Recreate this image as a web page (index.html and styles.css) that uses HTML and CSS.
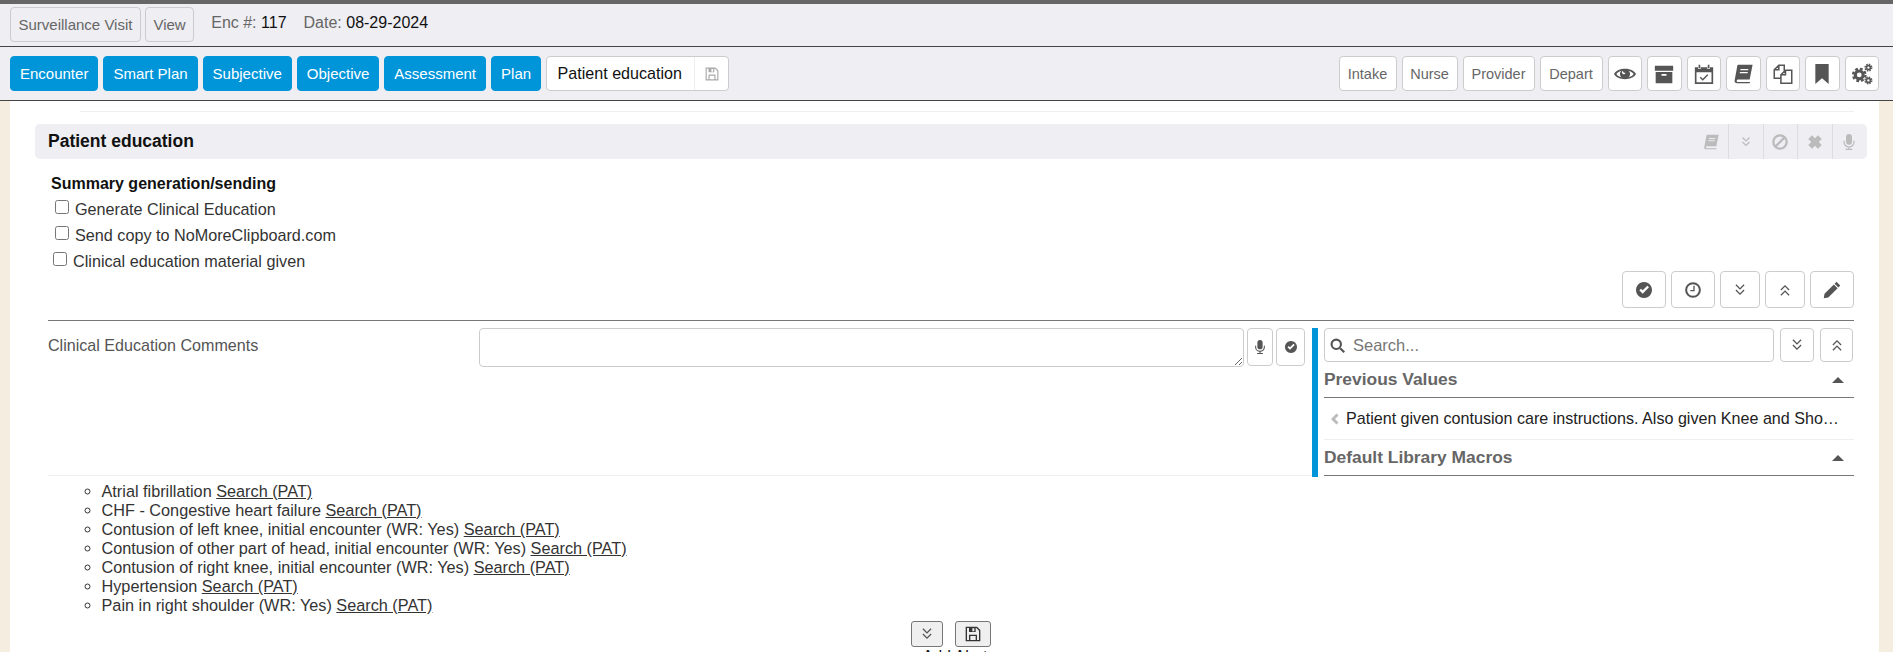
FILE: index.html
```html
<!DOCTYPE html>
<html lang="en">
<head>
<meta charset="utf-8">
<title>Patient education</title>
<link rel="stylesheet" href="styles.css">
</head>
<body>
<svg class="sprite" aria-hidden="true">
  <symbol id="i-eye" viewBox="0 0 24 24"><path fill-rule="evenodd" d="M0 12C4 4.500 20 4.500 24 12 20 19.500 4 19.500 0 12ZM2.500 12C6 17.500 18 17.500 21.500 12 18 6.500 6 6.500 2.500 12Z"/><path fill-rule="evenodd" d="M12 6.500a5.500 5.500 0 1 1-.01 0ZM9.500 8.500a2 2 0 1 0 3 2.500 3 3 0 0 1-3-2.500Z"/></symbol>
  <symbol id="i-archive" viewBox="0 0 24 24"><path fill-rule="evenodd" d="M1 2h22v6H1ZM2 9.500h20V23H2ZM9 12v2h6v-2Z"/></symbol>
  <symbol id="i-cal" viewBox="0 0 24 24"><path fill-rule="evenodd" d="M1 4h4v2h3V4h8v2h3V4h4v20H1ZM3 10v12h18V10Z"/><path d="M5.500 1h2v4h-2ZM16.500 1h2v4h-2Z"/><path d="M7.500 16l3 3 6-6" fill="none" stroke="currentColor" stroke-width="1.700"/></symbol>
  <symbol id="i-book" viewBox="0 0 24 24"><path fill-rule="evenodd" d="M6 1H23.500L20 18.500H6.500C5 18.500 4.500 19.200 4.400 20S5 21.500 6 21.500H20.500L20 23H5C2.500 23 1.500 21.500 2 19.500L5 3C5.200 2 5.500 1 6 1ZM9 6l-.3 1.500h9.500L18.500 6ZM8.300 9.500 8 11h9.500l.3-1.500Z"/></symbol>
  <symbol id="i-copy" viewBox="0 0 24 24"><path fill="none" stroke="currentColor" stroke-width="1.800" d="M9.500 17H1.500V7L7 1.500h6.500V8M7 1.500V7H1.500M9.500 23V13L15 7.500H22.500V23ZM15 7.500V13H9.500"/></symbol>
  <symbol id="i-mark" viewBox="0 0 24 24"><path d="M4 0H20V24L12 17 4 24Z"/></symbol>
  <symbol id="i-gears" viewBox="0 0 24 24"><g fill="none" stroke="currentColor"><circle cx="9" cy="13" r="4.300" stroke-width="3.400"/><circle cx="9" cy="13" r="6.800" stroke-width="2.400" stroke-dasharray="3 2.340"/><circle cx="19" cy="5" r="2.200" stroke-width="1.800"/><circle cx="19" cy="5" r="3.700" stroke-width="1.400" stroke-dasharray="1.700 1.200"/><circle cx="19" cy="19" r="2.200" stroke-width="1.800"/><circle cx="19" cy="19" r="3.700" stroke-width="1.400" stroke-dasharray="1.700 1.200"/></g></symbol>
  <symbol id="i-ban" viewBox="0 0 24 24"><g fill="none" stroke="currentColor" stroke-width="3.400"><circle cx="12" cy="12" r="10"/><path d="M5 19 19 5"/></g></symbol>
  <symbol id="i-x" viewBox="0 0 24 24"><path d="M3 8 8 3l4 4 4-4 5 5-4 4 4 4-5 5-4-4-4 4-5-5 4-4Z"/></symbol>
  <symbol id="i-mic" viewBox="0 0 24 24"><rect x="7.500" y="0" width="9" height="16" rx="4.500"/><path d="M4.500 10v2a7.500 7.500 0 0 0 15 0v-2M12 19.500V23M7 23h10" fill="none" stroke="currentColor" stroke-width="1.800"/></symbol>
  <symbol id="i-check" viewBox="0 0 24 24"><path fill-rule="evenodd" d="M12 0a12 12 0 1 1-.01 0ZM5 12.500 10 17.500 19.500 8 17 5.500 10 12.500 7.500 10Z"/></symbol>
  <symbol id="i-clock" viewBox="0 0 24 24"><circle cx="12" cy="12" r="10.300" fill="none" stroke="currentColor" stroke-width="3"/><path d="M12.500 5.500h2V14H8v-2h4.500Z"/></symbol>
  <symbol id="i-down" viewBox="0 0 24 24"><path fill="none" stroke="currentColor" stroke-width="2.200" d="M5 3l7 7 7-7M5 12l7 7 7-7"/></symbol>
  <symbol id="i-up" viewBox="0 0 24 24"><path fill="none" stroke="currentColor" stroke-width="2.200" d="M5 12l7-7 7 7M5 21l7-7 7 7"/></symbol>
  <symbol id="i-pencil" viewBox="0 0 24 24"><path d="M18 1 23 6 20.500 8.500 15.500 3.500ZM14.500 4.500 19.500 9.500 7 22 1 23 2 17Z"/></symbol>
  <symbol id="i-search" viewBox="0 0 24 24"><circle cx="10" cy="10" r="7.500" fill="none" stroke="currentColor" stroke-width="3.400"/><path d="M15 17.500 17.500 15 24 21.500 21.500 24Z"/></symbol>
  <symbol id="i-save" viewBox="0 0 24 24"><path fill-rule="evenodd" d="M1 1H18L23 6V23H1ZM3 3V21H21V7L17 3H16V9H6V3ZM11 3.500V8H14V3.500ZM6 13H18V21H16V15H8V21H6Z"/></symbol>
  <symbol id="i-left" viewBox="0 0 24 24"><path d="M15 1 19 5 12 12 19 19 15 23 4 12Z"/></symbol>
</svg>

<header class="topbar">
  <button class="btn btn-plain">Surveillance Visit</button>
  <button class="btn btn-plain">View</button>
  <div class="enc"><span class="enc-label">Enc #:</span> <b>117</b></div>
  <div class="enc"><span class="enc-label">Date:</span> <b>08-29-2024</b></div>
</header>

<nav class="navbar">
  <div class="nav-group">
    <button class="btn btn-blue">Encounter</button>
    <button class="btn btn-blue">Smart Plan</button>
    <button class="btn btn-blue">Subjective</button>
    <button class="btn btn-blue">Objective</button>
    <button class="btn btn-blue">Assessment</button>
    <button class="btn btn-blue">Plan</button>
    <div class="current">
      <span class="current-text">Patient education</span>
      <span class="current-save"><svg class="ico ico-14"><use href="#i-save"/></svg></span>
    </div>
  </div>
  <div class="nav-group">
    <button class="btn btn-white w58">Intake</button>
    <button class="btn btn-white w56">Nurse</button>
    <button class="btn btn-white w72">Provider</button>
    <button class="btn btn-white w63">Depart</button>
    <button class="btn btn-icon"><svg class="ico ico-22"><use href="#i-eye"/></svg></button>
    <button class="btn btn-icon"><svg class="ico ico-20"><use href="#i-archive"/></svg></button>
    <button class="btn btn-icon"><svg class="ico ico-20"><use href="#i-cal"/></svg></button>
    <button class="btn btn-icon"><svg class="ico ico-20"><use href="#i-book"/></svg></button>
    <button class="btn btn-icon"><svg class="ico ico-20"><use href="#i-copy"/></svg></button>
    <button class="btn btn-icon"><svg class="ico ico-20"><use href="#i-mark"/></svg></button>
    <button class="btn btn-icon"><svg class="ico ico-22"><use href="#i-gears"/></svg></button>
  </div>
</nav>

<main class="page">
  <div class="top-rule"></div>
  <section class="section-bar">
    <h2>Patient education</h2>
    <div class="section-tools">
      <span class="tool"><svg class="ico ico-16"><use href="#i-book"/></svg></span>
      <span class="tool"><svg class="ico ico-12"><use href="#i-down"/></svg></span>
      <span class="tool"><svg class="ico ico-16"><use href="#i-ban"/></svg></span>
      <span class="tool"><svg class="ico ico-18"><use href="#i-x"/></svg></span>
      <span class="tool"><svg class="ico ico-16"><use href="#i-mic"/></svg></span>
    </div>
  </section>

  <div class="content">
    <div class="summary">
      <h3>Summary generation/sending</h3>
      <label class="check c1"><input type="checkbox"> Generate Clinical Education</label>
      <label class="check c1"><input type="checkbox"> Send copy to NoMoreClipboard.com</label>
      <label class="check c2"><input type="checkbox"> Clinical education material given</label>
    </div>

    <div class="actions">
      <button class="btn btn-act w44"><svg class="ico ico-16"><use href="#i-check"/></svg></button>
      <button class="btn btn-act w44"><svg class="ico ico-16"><use href="#i-clock"/></svg></button>
      <button class="btn btn-act"><svg class="ico ico-14"><use href="#i-down"/></svg></button>
      <button class="btn btn-act"><svg class="ico ico-14"><use href="#i-up"/></svg></button>
      <button class="btn btn-act w44"><svg class="ico ico-18"><use href="#i-pencil"/></svg></button>
    </div>

    <div class="comments">
      <div class="comments-label">Clinical Education Comments</div>
      <div class="comments-input">
        <textarea class="textarea"></textarea>
        <button class="btn btn-mini w26"><svg class="ico ico-14"><use href="#i-mic"/></svg></button>
        <button class="btn btn-mini w29"><svg class="ico ico-12"><use href="#i-check"/></svg></button>
      </div>
      <aside class="side">
        <div class="side-search">
          <div class="search-box"><svg class="ico ico-15"><use href="#i-search"/></svg><span>Search...</span></div>
          <button class="btn btn-mini w34"><svg class="ico ico-14"><use href="#i-down"/></svg></button>
          <button class="btn btn-mini w33"><svg class="ico ico-14"><use href="#i-up"/></svg></button>
        </div>
        <div class="side-head"><span>Previous Values</span><i class="caret"></i></div>
        <div class="side-row"><svg class="ico ico-12 faint"><use href="#i-left"/></svg><span class="side-text">Patient given contusion care instructions. Also given Knee and Shoulder exercises.</span></div>
        <div class="side-head"><span>Default Library Macros</span><i class="caret"></i></div>
      </aside>
    </div>

    <ul class="problems">
      <li>Atrial fibrillation <a href="#">Search (PAT)</a></li>
      <li>CHF - Congestive heart failure <a href="#">Search (PAT)</a></li>
      <li>Contusion of left knee, initial encounter (WR: Yes) <a href="#">Search (PAT)</a></li>
      <li>Contusion of other part of head, initial encounter (WR: Yes) <a href="#">Search (PAT)</a></li>
      <li>Contusion of right knee, initial encounter (WR: Yes) <a href="#">Search (PAT)</a></li>
      <li>Hypertension <a href="#">Search (PAT)</a></li>
      <li>Pain in right shoulder (WR: Yes) <a href="#">Search (PAT)</a></li>
    </ul>

    <div class="foot">
      <button class="foot-btn w32"><svg class="ico ico-14"><use href="#i-down"/></svg></button>
      <button class="foot-btn w36"><svg class="ico ico-16 dark"><use href="#i-save"/></svg></button>
    </div>
    <div class="foot-text">Add Alert</div>
  </div>
</main>
</body>
</html>
```

FILE: styles.css
```css
* { box-sizing: border-box; }
html, body { margin: 0; height: 652px; overflow: hidden; }
body {
  background: #f5eee0;
  font-family: "Liberation Sans", Arial, sans-serif;
  font-size: 16px;
  color: #222;
}
.sprite { position: absolute; width: 0; height: 0; }
.ico { display: block; fill: currentColor; color: #555; flex: none; }
.ico-12 { width: 12px; height: 12px; }
.ico-14 { width: 14px; height: 14px; }
.ico-15 { width: 15px; height: 15px; }
.ico-16 { width: 16px; height: 16px; }
.ico-18 { width: 18px; height: 18px; }
.ico-20 { width: 20px; height: 20px; }
.ico-22 { width: 22px; height: 22px; }
.faint { color: #bbb; }
.dark { color: #333; }

.btn {
  display: flex;
  align-items: center;
  justify-content: center;
  height: 35px;
  padding: 0 7.500px;
  border-radius: 4px;
  border: 1px solid #ccc;
  font: 15px "Liberation Sans", Arial, sans-serif;
  background: #fff;
  color: #666;
  white-space: nowrap;
}
.btn-plain { background: #eeeef3; }
.btn-blue { background: #0095d9; border-color: #0095d9; color: #fff; padding: 0 9px; }
.btn-white { color: #666; padding: 0; font-size: 14.500px; }
.btn-icon { width: 34.500px; padding: 0; }
.w58 { width: 58px; }
.w56 { width: 56px; }
.w72 { width: 72px; }
.w63 { width: 63px; }

.topbar {
  height: 47px;
  border-top: 4px solid #666;
  border-bottom: 1px solid #444;
  background: #eeeef3;
  display: flex;
  align-items: center;
  gap: 4px;
  padding: 0 10px 2px;
}
.enc { margin-left: 13px; color: #666; margin-top: -3px; }
.enc + .enc { margin-left: 13px; }
.enc b { font-weight: 400; color: #111; }

.navbar {
  height: 54px;
  border-bottom: 1px solid #444;
  background: #eeeef3;
  display: flex;
  align-items: center;
  justify-content: space-between;
  padding: 0 14px 0 10px;
}
.nav-group { display: flex; gap: 5px; }
.current {
  display: flex;
  height: 35px;
  width: 183px;
  background: #fff;
  border: 1px solid #ccc;
  border-radius: 4px;
  align-items: center;
}
.current-text { width: 147px; padding-left: 10.500px; color: #111; font-size: 16.100px; white-space: nowrap; }
.current-save { flex: 1; height: 100%; border-left: 1px solid #eee; display: flex; align-items: center; justify-content: center; }
.current-save .ico { color: #aaa; }

.page { margin: 0 14px 0 10px; background: #fff; height: 552px; overflow: hidden; padding-top: 10px; }
.top-rule { margin: 0 25px 0 70px; height: 1px; background: #eee; }
.section-bar {
  margin: 12px 12px 0 25px;
  height: 35px;
  background: #eeeef3;
  border-radius: 5px;
  display: flex;
  align-items: center;
  justify-content: space-between;
  padding: 0 1px 0 13px;
}
.section-bar h2 { margin: 0; font-size: 17.500px; font-weight: 700; color: #111; }
.section-tools { display: flex; height: 100%; }
.tool { width: 34.500px; display: flex; align-items: center; justify-content: center; border-left: 1px solid #ddd; }
.tool:first-child { border-left: 0; }
.tool .ico { color: #bbb; }

.content { margin: 0 25px 0 38px; }
.summary { padding: 16px 0 0 3px; height: 112px; }
.summary h3 { margin: 0 0 3px; font-size: 16px; line-height: 18px; color: #111; }
.check { display: flex; align-items: center; height: 26px; color: #333; font-size: 16.200px; margin-left: 4px; gap: 4px; }
.check input { margin: 0 2px 0 0; width: 14px; height: 14px; position: relative; top: -2px; }
.c2 { margin-left: 2px; }

.actions { display: flex; justify-content: flex-end; gap: 5px; height: 37px; }
.btn-act { height: 37px; width: 40px; padding: 0; }
.w44 { width: 44px; }

.comments {
  display: flex;
  margin-top: 12px;
  border-top: 1px solid #777;
  height: 156px;
}
.comments-label { width: 431px; height: 155px; padding-top: 15px; color: #555; font-size: 16.100px; line-height: 18px; border-bottom: 1px solid #eee; }
.comments-input { display: flex; width: 833px; padding-top: 7px; height: 155px; gap: 3px; border-bottom: 1px solid #eee; }
.textarea { width: 765px; height: 39px; border: 1px solid #ccc; border-radius: 4px; resize: both; display: block; }
.btn-mini { height: 38px; padding: 0; }
.w26 { width: 26px; }
.w29 { width: 29px; }
.w33 { width: 33px; }
.w34 { width: 34px; }
.side { width: 542px; border-left: 6px solid #0095d9; margin-top: 7px; padding-left: 6px; height: 149px; }
.side-search { display: flex; gap: 6px; }
.side-search .btn-mini { height: 34px; }
.search-box {
  width: 450px;
  height: 34px;
  border: 1px solid #ccc;
  border-radius: 4px;
  display: flex;
  align-items: center;
  gap: 8px;
  padding-left: 5px;
  color: #777;
  font-size: 16.500px;
}
.side-head {
  display: flex;
  align-items: center;
  justify-content: space-between;
  height: 36px;
  border-bottom: 1px solid #777;
  font-weight: 700;
  font-size: 17.400px;
  color: #666;
  padding-right: 10px;
}
.caret { width: 0; height: 0; border: 6px solid transparent; border-top: 0; border-bottom: 6px solid #555; }
.side-row {
  display: flex;
  align-items: center;
  height: 42px;
  border-bottom: 1px solid #eee;
  padding-left: 5px;
  gap: 5px;
  color: #222;
}
.side-text { width: 496px; overflow: hidden; white-space: nowrap; text-overflow: ellipsis; font-size: 16.100px; }

.problems { list-style: circle; margin: 6px 0 0; padding: 0 0 0 53.500px; font-size: 16.250px; line-height: 19px; color: #333; }
.problems a { color: #333; text-decoration: underline; }

.foot { display: flex; gap: 12px; margin: 6px 0 0 863px; }
.foot-btn {
  height: 26px;
  border: 1px solid #767676;
  border-radius: 3px;
  background: #efefef;
  display: flex;
  align-items: center;
  justify-content: center;
  padding: 0;
}
.w32 { width: 32px; }
.w36 { width: 36px; }
.foot-text { text-align: center; width: 100px; margin: 1px 0 0 857px; color: #111; }
```
